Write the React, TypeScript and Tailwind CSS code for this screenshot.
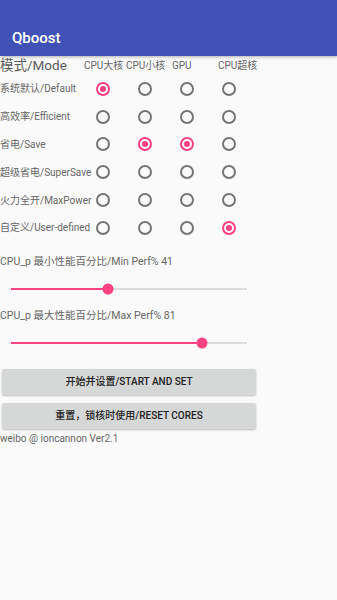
import { useState } from "react";

const COLS = ["big", "little", "gpu", "prime"];

const MODES = [
  { label: "系统默认/Default", sel: [true, false, false, false] },
  { label: "高效率/Efficient", sel: [false, false, false, false] },
  { label: "省电/Save", sel: [false, true, true, false] },
  { label: "超级省电/SuperSave", sel: [false, false, false, false] },
  { label: "火力全开/MaxPower", sel: [false, false, false, false] },
  { label: "自定义/User-defined", sel: [false, false, false, true] },
];

function Radio({ checked }: { checked: boolean }) {
  return (
    <span
      className={
        "flex h-[14px] w-[14px] items-center justify-center rounded-full border-2 " +
        (checked ? "border-[#ff4081]" : "border-[#757575]")
      }
    >
      {checked && <span className="h-[6px] w-[6px] rounded-full bg-[#ff4081]" />}
    </span>
  );
}

function Slider({ value }: { value: number }) {
  return (
    <div className="flex h-[36px] items-center pl-[11px]">
      <div className="relative h-[2px] w-[236px] bg-[#dcdcdc]">
        <div className="h-full bg-[#ff4081]" style={{ width: `${value}%` }} />
        <div
          className="absolute top-1/2 h-[11px] w-[11px] -translate-x-1/2 -translate-y-1/2 rounded-full bg-[#ff4081]"
          style={{ left: `${value}%` }}
        />
      </div>
    </div>
  );
}

export default function App() {
  const [minPerf] = useState(41);
  const [maxPerf] = useState(81);

  return (
    <div
      className="min-h-[600px] w-[337px] bg-[#fafafa] text-[#666]"
      style={{ fontFamily: 'Roboto, "Noto Sans CJK SC", sans-serif' }}
    >
      <div className="flex h-[56px] items-end bg-[#3f51b5] pb-[7px] pl-[12px] shadow-[0_1px_3px_rgba(0,0,0,0.3)]">
        <span className="text-[15px] font-medium text-white">Qboost</span>
      </div>

      <div className="flex h-[19px] items-center text-[10px]">
        <span className="w-[84px] text-[13.5px] text-[#5a5a5a]">模式/Mode</span>
        <span className="w-[42px]">CPU大核</span>
        <span className="w-[46px]">CPU小核</span>
        <span className="w-[46px]">GPU</span>
        <span>CPU超核</span>
      </div>

      {MODES.map((m) => (
        <div key={m.label} className="flex h-[27.8px] items-center text-[10px]">
          <span className="w-[96px] whitespace-nowrap">{m.label}</span>
          {COLS.map((c, i) => (
            <span key={c} className="w-[42px]">
              <Radio checked={m.sel[i]} />
            </span>
          ))}
        </div>
      ))}

      <div className="mt-[11px] flex h-[18px] items-center text-[10.5px]">
        CPU_p 最小性能百分比/Min Perf% {minPerf}
      </div>
      <Slider value={minPerf} />

      <div className="flex h-[18px] items-center text-[10.5px]">
        CPU_p 最大性能百分比/Max Perf% {maxPerf}
      </div>
      <Slider value={maxPerf} />

      <div className="flex flex-col gap-[8px] pt-[8px] pl-[2px]">
        <button
          type="button"
          className="h-[26px] w-[254px] rounded-[2px] bg-[#d6d7d7] text-[10px] font-medium text-[#222] shadow-[0_1px_2px_rgba(0,0,0,0.25)]"
        >
          开始并设置/START AND SET
        </button>
        <button
          type="button"
          className="h-[26px] w-[254px] rounded-[2px] bg-[#d6d7d7] text-[10px] font-medium text-[#222] shadow-[0_1px_2px_rgba(0,0,0,0.25)]"
        >
          重置，锁核时使用/RESET CORES
        </button>
      </div>
      <div className="mt-[2px] text-[10px]">weibo @ ioncannon Ver2.1</div>
    </div>
  );
}
